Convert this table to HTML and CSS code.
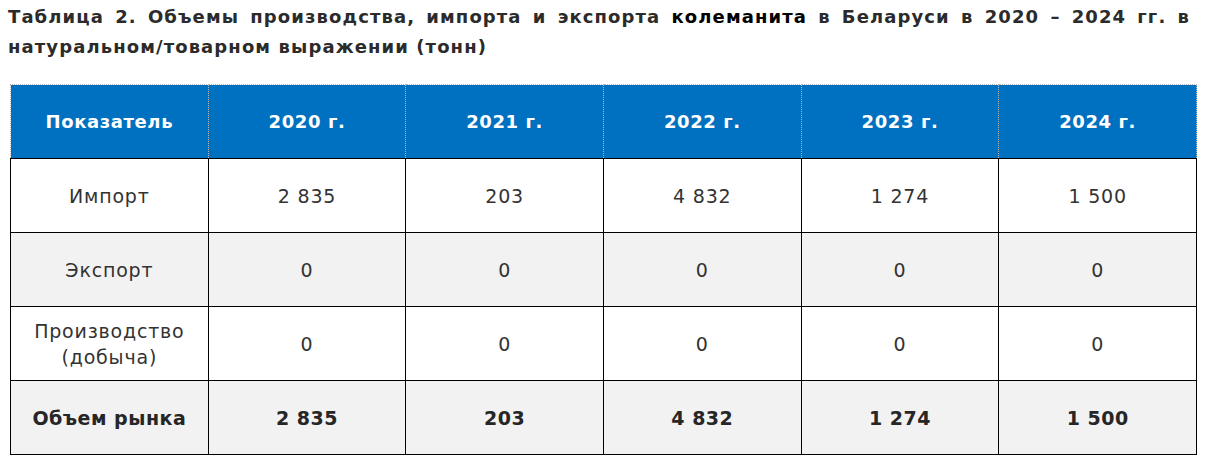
FILE: index.html
```html
<!DOCTYPE html>
<html lang="ru">
<head>
<meta charset="utf-8">
<link rel="stylesheet" href="styles.css">
</head>
<body>
<div class="page">
  <p class="title">Таблица 2. Объемы производства, импорта и экспорта <span class="strong">колеманита</span> в Беларуси в 2020 – 2024 гг. в натуральном/товарном выражении (тонн)</p>
  <table class="data">
    <thead>
      <tr>
        <th>Показатель</th>
        <th>2020 г.</th>
        <th>2021 г.</th>
        <th>2022 г.</th>
        <th>2023 г.</th>
        <th>2024 г.</th>
      </tr>
    </thead>
    <tbody>
      <tr>
        <td>Импорт</td><td>2 835</td><td>203</td><td>4 832</td><td>1 274</td><td>1 500</td>
      </tr>
      <tr class="alt">
        <td>Экспорт</td><td>0</td><td>0</td><td>0</td><td>0</td><td>0</td>
      </tr>
      <tr>
        <td>Производство<br>(добыча)</td><td>0</td><td>0</td><td>0</td><td>0</td><td>0</td>
      </tr>
      <tr class="alt total">
        <td>Объем рынка</td><td>2 835</td><td>203</td><td>4 832</td><td>1 274</td><td>1 500</td>
      </tr>
    </tbody>
  </table>
</div>
</body>
</html>
```
FILE: styles.css
```css
html, body {
  margin: 0;
  padding: 0;
  background: #ffffff;
}
.page {
  padding: 2px 16px 0 8px;
  font-family: "DejaVu Sans", "Liberation Sans", sans-serif;
  color: #262626;
}
.title {
  margin: 0;
  font-size: 18px;
  font-weight: bold;
  line-height: 30px;
  letter-spacing: 1.1px;
  text-align: justify;
  color: #2b2b2b;
}
.title .strong {
  color: #000000;
}
.data {
  margin: 22px 0 0 2px;
  width: 1187px;
  border-collapse: collapse;
  table-layout: fixed;
}
.data th {
  background: #0070c0;
  color: #ffffff;
  font-size: 18px;
  font-weight: bold;
  letter-spacing: 0.6px;
  height: 73px;
  padding: 0;
  border: 1px dotted #b8b8b8;
  border-bottom: 1px solid #000;
}
.data td {
  height: 73px;
  padding: 0;
  text-align: center;
  font-size: 19px;
  letter-spacing: 0.8px;
  line-height: 26px;
  border: 1px solid #000;
  color: #333333;
}
.data tr.alt td {
  background: #f2f2f2;
}
.data tr.total td {
  font-weight: bold;
  letter-spacing: 0.5px;
  color: #262626;
}
```
